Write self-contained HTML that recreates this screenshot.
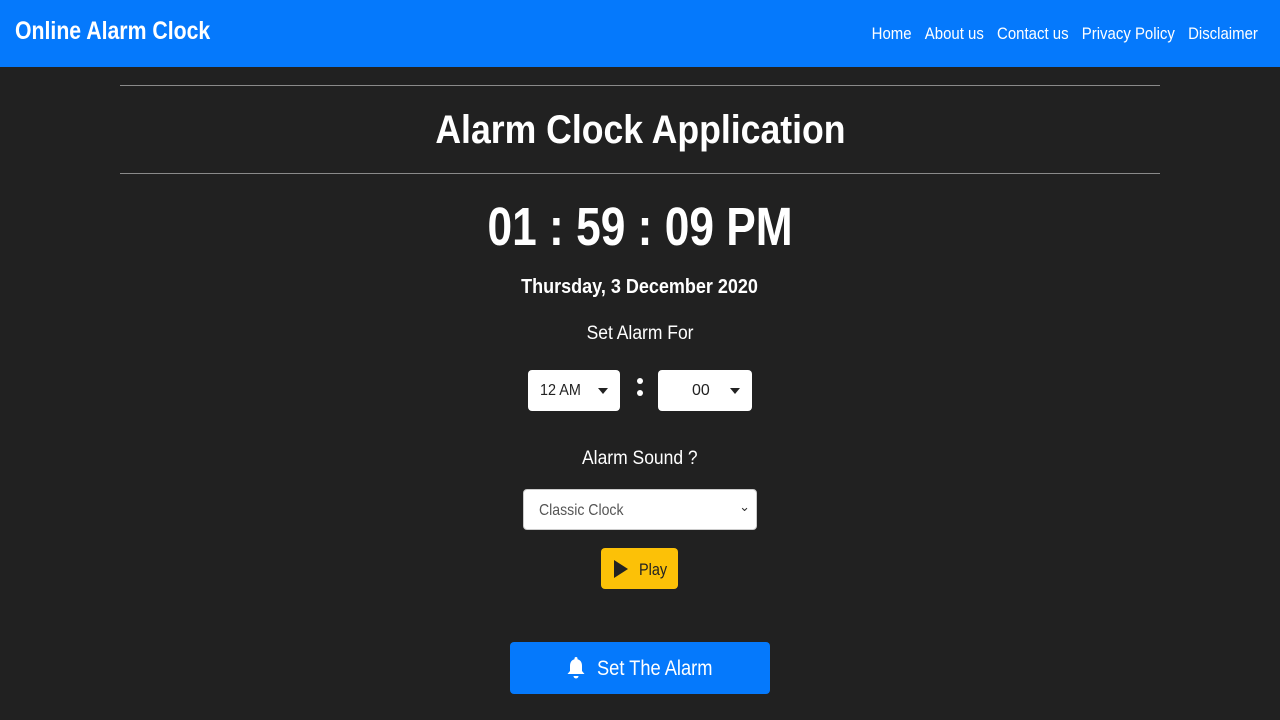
<!DOCTYPE html>
<html><head><meta charset="utf-8"><style>
*{margin:0;padding:0;box-sizing:border-box}
body{width:1280px;height:720px;background:#212121;font-family:"Liberation Sans",sans-serif;color:#fff;position:relative;overflow:hidden}
.nav{position:absolute;left:0;top:0;width:1280px;height:67px;background:#0579fc}
.brand{position:absolute;left:15px;top:17px;font-size:25px;font-weight:bold;transform:scaleX(.85);transform-origin:left}
.links{position:absolute;right:22px;top:24px;font-size:17px;transform:scaleX(.88);transform-origin:right}
.links span{margin-left:15px}
.hr{position:absolute;left:120px;width:1040px;height:1px;background:#8a8a8a}
.c{position:absolute;left:0;width:1280px;text-align:center}
.c span{display:inline-block}
.box{position:absolute;background:#fff;border-radius:4px;color:#222;font-size:16px}
.tri{position:absolute;width:0;height:0;border-left:5px solid transparent;border-right:5px solid transparent;border-top:6px solid #222}
</style></head><body>
<div class="nav"><div class="brand">Online Alarm Clock</div>
<div class="links"><span>Home</span><span>About us</span><span>Contact us</span><span>Privacy Policy</span><span>Disclaimer</span></div></div>
<div class="hr" style="top:85px"></div>
<div class="c" style="top:108px;font-size:40px;font-weight:bold"><span style="transform:scaleX(.89)">Alarm Clock Application</span></div>
<div class="hr" style="top:173px"></div>
<div class="c" style="top:196px;font-size:54px;font-weight:bold"><span style="transform:scaleX(.82)">01 : 59 : 09 PM</span></div>
<div class="c" style="top:276px;font-size:20px;font-weight:bold"><span style="transform:scaleX(.9)">Thursday, 3 December 2020</span></div>
<div class="c" style="top:323px;font-size:19px"><span style="transform:scaleX(.92)">Set Alarm For</span></div>
<div class="box" style="left:528px;top:370px;width:92px;height:41px"><span style="position:absolute;left:12px;top:12px;transform:scaleX(.9);transform-origin:left">12 AM</span><div class="tri" style="left:70px;top:18px"></div></div>
<div style="position:absolute;left:637px;top:378px;width:6px;height:6px;border-radius:3px;background:#fff"></div>
<div style="position:absolute;left:637px;top:390px;width:6px;height:6px;border-radius:3px;background:#fff"></div>
<div class="box" style="left:658px;top:370px;width:94px;height:41px"><span style="position:absolute;left:34px;top:12px">00</span><div class="tri" style="left:72px;top:18px"></div></div>
<div class="c" style="top:448px;font-size:19px"><span style="transform:scaleX(.92)">Alarm Sound ?</span></div>
<div class="box" style="left:523px;top:489px;width:234px;height:41px;border:1px solid #ccc"><span style="position:absolute;left:15px;top:12px;color:#555;transform:scaleX(.88);transform-origin:left">Classic Clock</span><span style="position:absolute;right:6px;top:9px;font-size:13px;color:#333">&#8964;</span></div>
<div style="position:absolute;left:601px;top:548px;width:77px;height:41px;background:#fcc107;border-radius:4px;color:#222">
<svg style="position:absolute;left:13px;top:12px" width="14" height="18"><path d="M0 0L14 9L0 18Z" fill="#222"/></svg>
<span style="position:absolute;left:38px;top:12px;font-size:17px;transform:scaleX(.85);transform-origin:left">Play</span></div>
<div style="position:absolute;left:510px;top:642px;width:260px;height:52px;background:#0579fc;border-radius:4px">
<svg style="position:absolute;left:57px;top:15px" width="18" height="22" viewBox="0 0 18 22"><path d="M9 0a1.5 1.5 0 0 1 1.5 1.5v.8C13.5 3 15 5.5 15 9v5l2.5 3H.5L3 14V9c0-3.5 1.5-6 4.5-6.7v-.8A1.5 1.5 0 0 1 9 0zM6.5 19h5a2.5 2.5 0 0 1-5 0z" fill="#fff"/></svg>
<span style="position:absolute;left:87px;top:15px;font-size:21px;transform:scaleX(.87);transform-origin:left">Set The Alarm</span></div>
</body></html>
